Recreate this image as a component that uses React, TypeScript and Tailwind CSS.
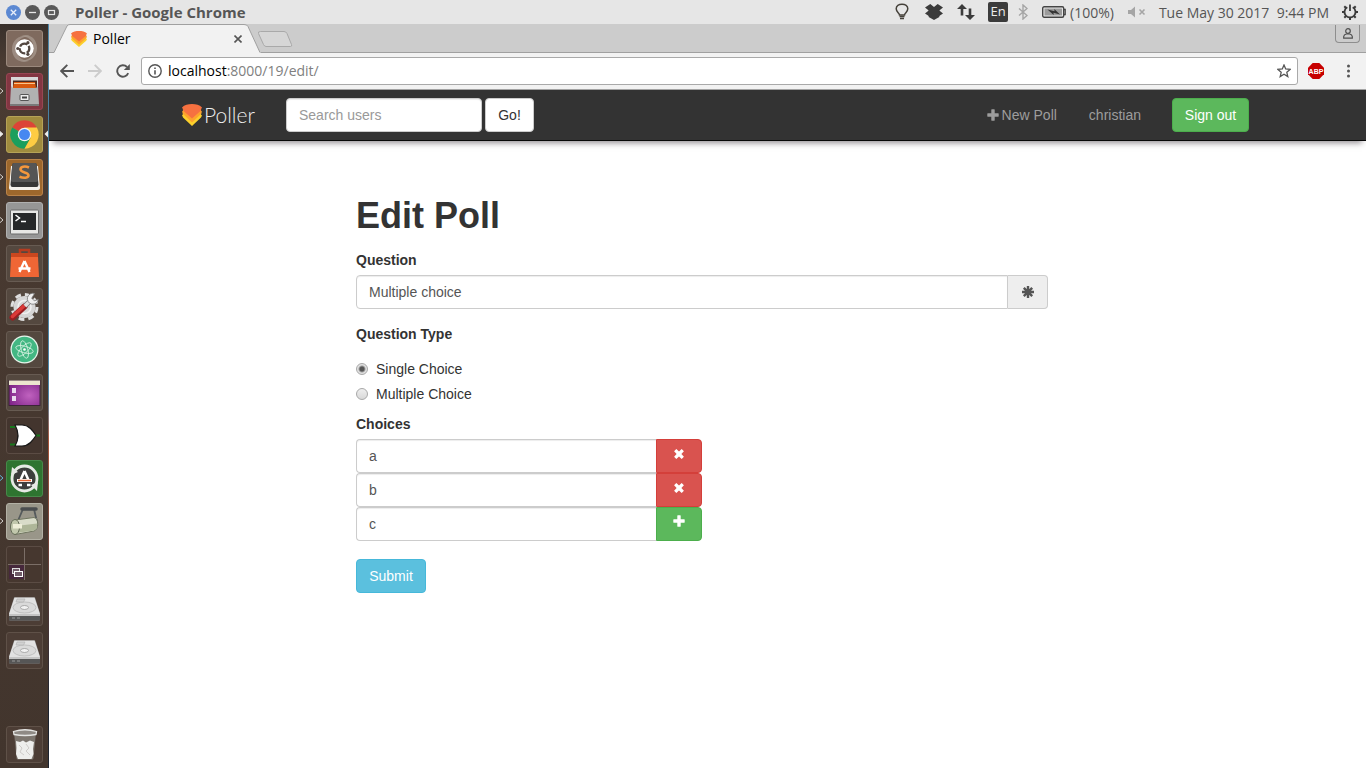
import React, { useState } from "react";

const shellFont = "font-['Open_Sans','Noto_Sans',sans-serif]";

function PollerMark({ className }: { className: string }) {
  return (
    <svg viewBox="0 0 20 22" className={className} aria-hidden="true" preserveAspectRatio="none">
      <path d="M0 11Q1.500 11 .8 9H19.200Q18.500 11 20 11.500L19 13.500 10 22 1 13.500z" fill="#fbd02c" />
      <path d="M0 7.500Q1.500 7.500 .8 5.500H19.200Q18.500 7.500 20 7.500L19 10 10 18.500 1 10z" fill="#fda32d" />
      <path d="M0 3.500C2.500.8 6 0 10 0s7.500.8 10 3.500Q18.800 5 18.500 7L10 14.500 1.500 7Q1.200 5 0 3.500z" fill="#f67140" />
    </svg>
  );
}

function WindowButtons() {
  return (
    <div className="flex gap-1">
      <button aria-label="Close" className="size-[15px]">
        <svg viewBox="0 0 15 15" className="size-full">
          <circle cx="7.5" cy="7.5" r="7.5" fill="#5b88d2" />
          <path d="M4.8 4.8l5.4 5.4M10.2 4.8l-5.4 5.4" stroke="#e8eefa" strokeWidth="1.3" />
        </svg>
      </button>
      <button aria-label="Minimize" className="size-[15px]">
        <svg viewBox="0 0 15 15" className="size-full">
          <circle cx="7.5" cy="7.5" r="7.5" fill="#595959" />
          <path d="M4 7.5h7" stroke="#e6e6e6" strokeWidth="1.3" />
        </svg>
      </button>
      <button aria-label="Maximize" className="size-[15px]">
        <svg viewBox="0 0 15 15" className="size-full">
          <circle cx="7.5" cy="7.5" r="7.5" fill="#595959" />
          <rect x="4.5" y="5.5" width="6" height="4" fill="none" stroke="#e6e6e6" strokeWidth="1.2" />
        </svg>
      </button>
    </div>
  );
}

function TopPanel() {
  return (
    <header className={`flex h-6 items-center bg-[#e6e6e6] pr-[7px] pl-[6px] text-[14px] text-[#555] ${shellFont}`}>
      <WindowButtons />
      <span className="ml-4 text-[15px] leading-5 font-bold whitespace-nowrap text-[#565656]">Poller - Google Chrome</span>
      <div className="ml-auto flex items-center whitespace-nowrap">
        <svg viewBox="0 0 14 18" className="h-[18px] w-[14px]" fill="none" stroke="#45413a">
          <path d="M4.500 12C4.500 10 1.200 9 1.200 5.800 1.200 3 3.800 1.200 7 1.200s5.800 1.800 5.800 4.600C12.800 9 9.500 10 9.500 12z" strokeWidth="1.500" />
          <path d="M4.500 13.500h5M5 15.500h4" strokeWidth="1.600" />
        </svg>
        <svg viewBox="0 0 18 16" className="ml-4 h-4 w-[18px]" fill="#3b3b3b">
          <path d="M5.300 0L9 3 12.700 0 18 3.600 14.300 6.600 18 9.600 12.700 13 9 10 5.300 13 0 9.600 3.700 6.600 0 3.600z" />
          <path d="M3.700 6.500L9 3.200l5.300 3.300V13L9 16l-5.300-3z" />
        </svg>
        <svg viewBox="0 0 18 16" className="ml-[14px] h-4 w-[18px]" fill="#3b3b3b">
          <path d="M0 5L5 0l5 5H6.300v6.500H3.700V5z" />
          <path d="M8 11l5 5 5-5h-3.700V4.500h-2.600V11z" />
        </svg>
        <span className="ml-[13px] flex size-5 items-center justify-center rounded-[2px] bg-[#3b3b3b] text-[13px] text-[#ececec]">En</span>
        <svg viewBox="0 0 10 16" className="ml-[10px] h-4 w-[10px]" fill="none" stroke="#a5a5a5" strokeWidth="1.400">
          <path d="M1 4.500l8 7-4 3.500V1l4 3.500-8 7" />
        </svg>
        <svg viewBox="0 0 24 12" className="ml-[14px] h-3 w-6">
          <rect x="0.700" y="0.700" width="21" height="10.600" rx="1.500" fill="#e6e6e6" stroke="#444" strokeWidth="1.400" />
          <rect x="2.500" y="2.500" width="17.500" height="7" fill="#9b9b9b" />
          <path d="M22 3.500h1.200v5H22" fill="none" stroke="#444" strokeWidth="1.300" />
          <path d="M5.500 3.500l7 1.800-.2-2.300L18 8.500l-6.500-1.800.2 2.300z" fill="#333" />
        </svg>
        <span className="ml-1">(100%)</span>
        <svg viewBox="0 0 18 12" className="ml-[14px] h-3 w-[18px]">
          <path d="M0 4h3l4-3.500v11L3 8H0z" fill="#a5a5a5" />
          <path d="M11.500 3.500l5 5M16.500 3.500l-5 5" stroke="#a5a5a5" strokeWidth="1.600" />
        </svg>
        <span className="ml-[13px] whitespace-pre">Tue May 30 2017  9:44 PM</span>
        <svg viewBox="0 0 18 18" className="ml-3 size-[18px]" fill="none" stroke="#3b3b3b">
          <path d="M6.300 4.200A5.500 5.500 0 1 0 11.700 4.200" strokeWidth="1.800" />
          <path d="M9 1.500v6.500" strokeWidth="1.800" />
          <path d="M3.300 3.300l1.700 1.700M14.700 3.300L13 5M1 9h2.500M14.500 9H17M3.300 14.700L5 13M14.700 14.700L13 13M9 14.500V17" strokeWidth="2" />
        </svg>
      </div>
    </header>
  );
}

type Launcher = { label: string; tile: string; marker?: "white" | "outline" | "blue"; active?: boolean; art: React.ReactNode };

const dark = "bg-[#54483f] border-[#675b52]";

const driveArt = (
  <>
    <path d="M8 8.500h21l5 16v6q0 1-1 1H4q-1 0-1-1v-6z" fill="#8d8d8d" />
    <path d="M8.500 8.500h20L34 25H3z" fill="#e2e2e2" />
    <path d="M3 25h31v5.500q0 1-1 1H4q-1 0-1-1z" fill="#565656" />
    <path d="M3 25h31v2H3z" fill="#c4c4c4" />
    <path d="M6 29h3M11 29h3" stroke="#999" />
    <ellipse cx="18.500" cy="18.500" rx="11.500" ry="5.500" fill="#dadada" stroke="#c0c0c0" />
    <ellipse cx="18.500" cy="18.500" rx="4" ry="2" fill="#f2f2f2" stroke="#9a9a9a" strokeWidth="0.800" />
    <path d="M11 10h8l-1.500 3H10z" fill="#d2d2d2" stroke="#b0b0b0" strokeWidth="0.600" />
  </>
);

const launchers: Launcher[] = [
  {
    label: "Search",
    tile: "bg-[#7f6a5e] border-[#9b897d]",
    art: (
      <>
        <path d="M6 19C6 9 15 4 24 6c-8 0-14 5-14 12 0 8 6 13 13 13C13 34 6 28 6 19z" fill="#a89a90" opacity=".7" />
        <path d="M31 18c0 10-9 15-17 13 8 0 14-5 14-12 0-8-6-13-13-13 9-3 16 3 16 12z" fill="#b3a69c" opacity=".6" />
        <circle cx="18.500" cy="18.500" r="9.300" fill="#fff" />
        <circle cx="18.500" cy="18.500" r="4.800" fill="none" stroke="#534741" strokeWidth="2.300" strokeDasharray="8.550 1.500" strokeDashoffset="3.500" />
        <circle cx="11.800" cy="18.500" r="1.600" fill="#534741" />
        <circle cx="21.900" cy="12.700" r="1.600" fill="#534741" />
        <circle cx="21.900" cy="24.300" r="1.600" fill="#534741" />
      </>
    ),
  },
  {
    label: "Files",
    tile: "bg-[#833642] border-[#974653]",
    marker: "outline",
    art: (
      <>
        <path d="M5 4h27v12H5z" fill="#d8d8d8" />
        <path d="M7 7.500h24v9H7z" fill="#4a2a20" />
        <path d="M8 9h21l1 6H7z" fill="#d8590f" />
        <path d="M8 10.500h21" stroke="#f9c58c" />
        <path d="M5 13l2 2h23l2-2 1 18.500H4z" fill="#b1b1b1" />
        <path d="M4 31h29v2H4z" fill="#797979" />
        <rect x="14" y="21.500" width="9" height="6" rx="1" fill="#eee" stroke="#555" />
        <path d="M16 24.500h5" stroke="#444" strokeWidth="2" />
      </>
    ),
  },
  {
    label: "Google Chrome",
    tile: "bg-[#a08b3e] border-[#b6a257]",
    marker: "white",
    active: true,
    art: (
      <>
        <path d="M18.500 18.500L6.200 11.400A14.200 14.200 0 0 1 30.800 11.400Z" fill="#dc4437" />
        <path d="M18.500 18.500L6.200 11.400A14.200 14.200 0 0 0 18.500 32.700L24.500 22Z" fill="#1b9f5d" />
        <path d="M18.500 11.500H30.900A14.200 14.200 0 0 1 18.500 32.700L24.600 22Z" fill="#fecc43" />
        <circle cx="18.500" cy="18.500" r="6.800" fill="#f3f3f3" />
        <circle cx="18.500" cy="18.500" r="5.500" fill="#4688f1" />
      </>
    ),
  },
  {
    label: "Sublime Text",
    tile: "bg-[#9d672c] border-[#b98249]",
    marker: "outline",
    art: (
      <>
        <path d="M5 7h27l2 22q0 2-2 2H5q-2 0-2-2z" fill="#f4f1ec" />
        <path d="M8 4h21q1.500 0 1.700 1.500l1.800 20q0 2.500-2 2.500H6.500q-2 0-2-2.500l1.800-20Q6.500 4 8 4z" fill="#363636" />
        <path d="M8 4h21q1.500 0 1.700 1.500L32 21q0 2-2 2H7q-2 0-2-2L6.300 5.500Q6.500 4 8 4z" fill="#555" />
        <path d="M23 8.500c-4-1.800-8.500-1-8.500 1.800 0 3.700 8 2.500 8 6 0 3-5 3-9 1.500" fill="none" stroke="#f5973c" strokeWidth="2.600" />
      </>
    ),
  },
  {
    label: "Terminal",
    tile: "bg-[#969696] border-[#b0b0b0]",
    marker: "outline",
    art: (
      <>
        <rect x="4.500" y="8" width="28" height="24" rx="1" fill="#e7e7e5" stroke="#6b6b6b" />
        <rect x="7" y="11" width="23" height="17" fill="#262829" />
        <path d="M9.500 13l4 3-4 3" stroke="#fff" strokeWidth="1.500" fill="none" />
        <path d="M15 19.500h5" stroke="#fff" strokeWidth="1.500" />
      </>
    ),
  },
  {
    label: "Ubuntu Software",
    tile: dark,
    art: (
      <>
        <path d="M14 9V5h9v4" fill="none" stroke="#b73c20" strokeWidth="2.500" />
        <path d="M5 8h27v5H5z" fill="#c9471f" />
        <path d="M5 12h27l1 20H4z" fill="#ef6635" />
        <path d="M18.500 16l-5 11M18.500 16l5 11M12.500 23.500h12" stroke="#fff" strokeWidth="2.400" fill="none" />
      </>
    ),
  },
  {
    label: "System Settings",
    tile: dark,
    art: (
      <>
        <circle cx="18.500" cy="19" r="12.500" fill="none" stroke="#dedede" strokeWidth="3" strokeDasharray="5.800 4.020" />
        <circle cx="18.500" cy="19" r="11" fill="#d5d5d5" />
        <circle cx="18.500" cy="19" r="6.500" fill="none" stroke="#f0f0f0" strokeWidth="1.500" />
        <path d="M6.500 29.500l12-11" stroke="#9a1e20" strokeWidth="6" strokeLinecap="round" />
        <path d="M6.500 28.500l12-11" stroke="#db3a38" strokeWidth="3.500" strokeLinecap="round" />
        <path d="M19 18l6-6" stroke="#777" strokeWidth="5" />
        <path d="M19 18l6-6" stroke="#ddd" strokeWidth="3.600" />
        <path d="M28.500 5.500a5.500 5.500 0 1 0 3.800 6l-4 1.300-2.600-2.600z" fill="#eee" stroke="#777" strokeWidth="0.800" />
      </>
    ),
  },
  {
    label: "Atom",
    tile: dark,
    art: (
      <>
        <circle cx="18.500" cy="18.500" r="14" fill="#e8f5ec" />
        <circle cx="18.500" cy="18.500" r="12.800" fill="#43b783" />
        <g fill="none" stroke="#d9f2e4" strokeWidth="0.800">
          <ellipse cx="18.500" cy="18.500" rx="9" ry="3.300" transform="rotate(15 18.500 18.500)" />
          <ellipse cx="18.500" cy="18.500" rx="9" ry="3.300" transform="rotate(75 18.500 18.500)" />
          <ellipse cx="18.500" cy="18.500" rx="9" ry="3.300" transform="rotate(135 18.500 18.500)" />
        </g>
        <circle cx="18.500" cy="18.500" r="1.300" fill="#fff" />
      </>
    ),
  },
  {
    label: "Desktop",
    tile: dark,
    art: (
      <>
        <defs>
          <radialGradient id="desktop-glow" cx=".65" cy=".6" r=".7">
            <stop offset="0" stopColor="#c062bf" />
            <stop offset="1" stopColor="#7f2488" />
          </radialGradient>
        </defs>
        <rect x="3" y="6.500" width="31" height="25" fill="url(#desktop-glow)" stroke="#3c2438" />
        <path d="M3 6.500h31v4.500H3z" fill="#ece6cf" />
        <path d="M6 14h4v5H6zM6 22h4v5H6z" fill="#e9d9ee" />
      </>
    ),
  },
  {
    label: "Logic Gate",
    tile: "bg-[#43352e] border-[#5b4c44]",
    art: (
      <>
        <path d="M4 10h7M4 27.500h7M28 18.500h6" stroke="#18771c" strokeWidth="1.800" />
        <path d="M9 8h7c7 0 11 6 14 10.500C27 23 23 29 16 29H9c4-7 4-14 0-21z" fill="#fff" stroke="#171717" strokeWidth="1.200" />
      </>
    ),
  },
  {
    label: "Software Updater",
    tile: "bg-[#2e7430] border-[#47894a]",
    marker: "blue",
    art: (
      <>
        <circle cx="18.500" cy="18.500" r="11" fill="#3d3d3d" />
        <circle cx="18.500" cy="18.500" r="12.500" fill="none" stroke="#e7e9e6" strokeWidth="2.800" />
        <path d="M5 15l1-8 6 5zM32 22l-1 9-6-6z" fill="#e7e9e6" />
        <path d="M18.500 11l-4 9M18.500 11l4 9" stroke="#fff" strokeWidth="2.500" />
        <path d="M11 19h15v3H11z" fill="#fff" />
        <path d="M12 20.500h13" stroke="#e86430" strokeWidth="1.500" />
        <path d="M12.500 25h3.500M21 25h3.500" stroke="#fff" strokeWidth="2.500" />
      </>
    ),
  },
  {
    label: "Seed Roller",
    tile: "bg-[#999689] border-[#b3b1a5]",
    marker: "outline",
    art: (
      <>
        <path d="M11 20l6-14M28 6l3 13" fill="none" stroke="#555a5c" strokeWidth="1.800" />
        <path d="M16 6h14" stroke="#4a4d4f" strokeWidth="3.500" strokeLinecap="round" />
        <path d="M9 17l19-2.500c5 1 5 12 0 13.500L9 31.500z" fill="#d9dcc9" stroke="#707660" />
        <path d="M10 23l21-2.500v4.500l-3 2.500-18 2.500z" fill="#aeb698" />
        <ellipse cx="9" cy="24" rx="4.500" ry="7.500" fill="#c1c7ac" stroke="#646b57" />
        <path d="M7 21h9v4.500H7z" fill="#eeeed8" />
      </>
    ),
  },
  {
    label: "Workspace Switcher",
    tile: "bg-[#46372f] border-[#5b4c44]",
    art: (
      <>
        <path d="M3 19h16v14H3z" fill="#46283c" />
        <path d="M18.500 2v32M2 18.500h33" stroke="#7b6e67" />
        <rect x="6.500" y="22.500" width="7" height="5" fill="#705b68" stroke="#ddd" />
        <rect x="8.500" y="25.500" width="8" height="5" fill="#705b68" stroke="#fff" />
      </>
    ),
  },
  { label: "Disk 1", tile: "bg-[#4c3d35] border-[#5f5148]", art: driveArt },
  { label: "Disk 2", tile: "bg-[#4c3d35] border-[#5f5148]", art: driveArt },
];

const trash: Launcher = {
  label: "Trash",
  tile: "bg-[#4c3d35] border-[#5f5148]",
  art: (
    <>
      <path d="M8 6h22l-2.500 26q-.2 1.500-1.500 1.500H12q-1.300 0-1.500-1.500z" fill="#7d766f" />
      <path d="M10 15l4 1 3-1.500 3 2 4-2 4 1.500-1 7 .5 5-2 5H12l-2-5 .5-6z" fill="#eeeeec" />
      <path d="M13 19l3 3-2 4 4 3M20 18l3 4-3 3 4 4" stroke="#cfccc9" fill="none" />
      <path d="M7.500 5.500Q19 2 30.500 5.500L30 8.500Q19 10.500 8 8.500z" fill="#8f8a85" stroke="#e5e5e3" strokeWidth="1.300" />
    </>
  ),
};

function LauncherTile({ item }: { item: Launcher }) {
  return (
    <button aria-label={item.label} className="relative flex h-[37px] w-full pl-[6px]">
      {item.marker && (
        <svg viewBox="0 0 4 8" className="absolute top-[14px] left-0 h-2 w-1">
          <path
            d="M-1 0.500L3 4l-4 3.500"
            fill={item.marker === "white" ? "#eee" : "none"}
            stroke={item.marker === "blue" ? "#62b6d4" : "#d4d0cd"}
          />
        </svg>
      )}
      <span className={`flex size-[37px] rounded-[3px] border ${item.tile}`}>
        <svg viewBox="1 1 35 35" className="size-[35px]">
          {item.art}
        </svg>
      </span>
      {item.active && (
        <svg viewBox="0 0 4 8" className="absolute top-[14px] right-0 h-2 w-1">
          <path d="M4 0.500L0.500 4 4 7.500z" fill="#eee" />
        </svg>
      )}
    </button>
  );
}

function Sidebar() {
  return (
    <aside className="flex shrink-0 bg-linear-to-b from-[#38302b] via-[#4a3b32] via-5% to-[#42352d]">
      <nav aria-label="Launcher" className="flex w-12 flex-col gap-[6px] pt-[6px] pb-[5px]">
        {launchers.map((item) => (
          <LauncherTile key={item.label} item={item} />
        ))}
        <div className="mt-auto">
          <LauncherTile item={trash} />
        </div>
      </nav>
      <div className="w-px bg-linear-to-b from-[#4b86a8] from-50% via-[#a8553a] via-56% to-[#1d2430] to-92%" />
    </aside>
  );
}

function TabStrip() {
  return (
    <div className="flex h-[29px] border-b border-[#a0a0a0] bg-[#cccccc]">
      <div className="relative -mb-px flex h-[29px] w-[212px] items-center pr-[17px] pl-[22px]">
        <svg viewBox="0 0 212 29" className="absolute inset-0 size-full">
          <path d="M0 28.500H5L18 2Q19 .5 21 .5H195Q198 .5 199 2.500L211 28.500H212V29H0z" fill="#f2f2f2" />
          <path d="M0 28.500H5L18 2Q19 .5 21 .5H195Q198 .5 199 2.500L211 28.500" fill="none" stroke="#a0a0a0" />
        </svg>
        <PollerMark className="relative h-4 w-4" />
        <span className="relative ml-[6px] text-[14px] text-black">Poller</span>
        <button aria-label="Close tab" className="relative ml-auto flex size-3 items-center justify-center">
          <svg viewBox="0 0 8 8" className="size-2">
            <path d="M.5.5l7 7M7.500.5l-7 7" stroke="#555" strokeWidth="1.600" />
          </svg>
        </button>
      </div>
      <button aria-label="New tab" className="-ml-1 h-[18px] w-9 self-start pt-[6px]">
        <svg viewBox="0 0 36 18" className="h-[18px] w-9">
          <path d="M3.500 1.500H27Q29 1.500 30 3.500l4.500 11q.8 2-1 2H9Q7.500 16.500 6.500 14.500L1.500 3.500q-.8-2 2-2z" fill="#d6d6d6" stroke="#a9a9a9" />
        </svg>
      </button>
      <button aria-label="Profile" className="mt-px mr-[6px] ml-auto flex h-[18px] w-[25px] items-center justify-center rounded-b-[4px] border border-t-0 border-[#8e8e8e]">
        <svg viewBox="0 0 10 11" className="h-[11px] w-[10px]" fill="none" stroke="#4f4f4f" strokeWidth="1.200">
          <circle cx="5" cy="3" r="2.300" />
          <path d="M.7 10.200V8.500Q1 6.500 3.300 6h3.400q2.300.5 2.600 2.500v1.700z" />
        </svg>
      </button>
    </div>
  );
}

function Toolbar() {
  const [url, setUrl] = useState("localhost:8000/19/edit/");
  const [host, ...rest] = url.split(":");
  return (
    <div className="flex h-[37px] items-center border-b border-[#a3a3a3] bg-[#f2f2f2] pr-[11px] pl-[11px]">
      <button aria-label="Back">
        <svg viewBox="0 0 14 14" className="size-[14px]" fill="none" stroke="#555" strokeWidth="1.900">
          <path d="M7.300.8L1.200 7l6.100 6.200M1.500 7H14" />
        </svg>
      </button>
      <button aria-label="Forward" className="ml-[14px]">
        <svg viewBox="0 0 14 14" className="size-[14px]" fill="none" stroke="#ccc" strokeWidth="1.900">
          <path d="M6.700.8L12.800 7l-6.100 6.200M12.500 7H0" />
        </svg>
      </button>
      <button aria-label="Reload" className="ml-[14px]">
        <svg viewBox="0 0 14 14" className="size-[14px]">
          <path d="M12.200 9.200A5.700 5.700 0 1 1 11 3" fill="none" stroke="#555" strokeWidth="1.900" />
          <path d="M13.800 0v6H7.800z" fill="#555" />
        </svg>
      </button>
      <div className="ml-[11px] flex h-[28px] flex-1 items-center rounded-[3px] border border-[#a9a9a9] bg-white px-[6px]">
        <svg viewBox="0 0 14 14" className="size-[14px]" fill="none" stroke="#555">
          <circle cx="7" cy="7" r="6.200" strokeWidth="1.400" />
          <path d="M7 6.200v4.300M7 3.500v1.600" strokeWidth="1.600" />
        </svg>
        <label className="relative ml-[6px] flex flex-1 items-center text-[14px] leading-5">
          <span aria-hidden="true" className="text-[#808080]">
            <span className="text-black">{host}</span>
            {rest.length > 0 && ":" + rest.join(":")}
          </span>
          <input
            aria-label="Address"
            value={url}
            onChange={(e) => setUrl(e.target.value)}
            className="absolute inset-0 w-full bg-transparent text-transparent caret-black outline-none"
          />
        </label>
        <button aria-label="Bookmark">
          <svg viewBox="0 0 14 14" className="size-[14px]" fill="none" stroke="#555" strokeWidth="1.300">
            <path d="M7 1l1.700 4 4.400.4-3.300 2.900 1 4.300L7 10.300l-3.800 2.300 1-4.300L.9 5.400 5.300 5z" />
          </svg>
        </button>
      </div>
      <button aria-label="Adblock Plus" className="ml-[10px]">
        <svg viewBox="0 0 16 16" className="size-4">
          <path d="M4.700 0h6.600L16 4.700v6.600L11.300 16H4.700L0 11.300V4.700z" fill="#c70000" />
          <text x="8" y="10.700" textAnchor="middle" fontSize="7" fontWeight="bold" fill="#fff" fontFamily="Liberation Sans">ABP</text>
        </svg>
      </button>
      <button aria-label="Menu" className="ml-[18px]">
        <svg viewBox="0 0 13 14" className="h-[14px] w-[13px]" fill="#555">
          <circle cx="6.500" cy="2" r="1.500" />
          <circle cx="6.500" cy="7" r="1.500" />
          <circle cx="6.500" cy="12" r="1.500" />
        </svg>
      </button>
    </div>
  );
}

function PlusGlyph({ className }: { className: string }) {
  return (
    <svg viewBox="0 0 12 12" className={className} fill="currentColor" aria-hidden="true">
      <path d="M4.700.3h2.600q.4 0 .4.400v3.600h3.600q.4 0 .4.400v2.600q0 .4-.4.400H7.700v3.600q0 .4-.4.400H4.700q-.4 0-.4-.4V7.700H.7q-.4 0-.4-.4V4.700q0-.4.400-.4h3.600V.7q0-.4.400-.4z" />
    </svg>
  );
}

function RemoveGlyph() {
  return (
    <svg viewBox="0 0 10 10" className="size-[10px]" fill="currentColor" aria-hidden="true">
      <path d="M2.300.1L5 2.600 7.700.1l2.200 2.200L7.400 5l2.500 2.700-2.200 2.200L5 7.400 2.300 9.900.1 7.700 2.600 5 .1 2.300z" />
    </svg>
  );
}

function AsteriskGlyph() {
  return (
    <svg viewBox="0 0 12 12" className="size-3" stroke="#555" strokeWidth="2.400" aria-hidden="true">
      <path d="M6 0v12M0 6h12M1.800 1.800l8.400 8.400M10.200 1.800l-8.400 8.400" />
    </svg>
  );
}

const field =
  "h-[34px] min-w-0 border border-[#ccc] bg-white px-3 text-[14px] text-[#555] shadow-[inset_0_1px_1px_rgba(0,0,0,0.075)] outline-none placeholder:text-[#999]";

function Navbar() {
  return (
    <nav className="border-b border-[#080808] bg-[#333] shadow-[0_6px_6px_-4px_rgba(40,30,40,0.5)]">
      <div className="mx-auto flex h-[50px] max-w-[1171px] items-center pr-11 pl-[60px]">
        <a href="#home" className="flex w-[73px] items-center">
          <PollerMark className="h-[22px] w-5" />
          <span className="ml-[2px] font-['Lato',sans-serif] text-[21px] font-light text-[#eee]">Poller</span>
        </a>
        <form className="ml-[31px] flex gap-[3px]" onSubmit={(e) => e.preventDefault()}>
          <input aria-label="Search users" placeholder="Search users" className={`${field} w-[196px] rounded-[4px]`} />
          <button className="h-[34px] w-[49px] rounded-[4px] border border-[#ccc] bg-white text-[#333]">Go!</button>
        </form>
        <div className="ml-auto flex items-center text-[#9d9d9d]">
          <a href="#new" className="flex items-center gap-[3px]">
            <PlusGlyph className="size-3" />
            New Poll
          </a>
          <a href="#profile" className="ml-8">christian</a>
          <button className="ml-[31px] h-[34px] w-[77px] rounded-[4px] border border-[#4cae4c] bg-[#5cb85c] text-white">Sign out</button>
        </div>
      </div>
    </nav>
  );
}

const radio =
  "size-3 appearance-none rounded-full border border-[#a8a8a8] bg-linear-to-b from-[#eee] to-[#d8d8d8] checked:bg-[radial-gradient(circle,#555_0_2px,#e2e2e2_4px)]";

function EditPoll() {
  const [question, setQuestion] = useState("Multiple choice");
  const [type, setType] = useState("Single Choice");
  const [choices, setChoices] = useState(["a", "b", "c"]);
  return (
    <main className="mx-auto w-full max-w-[1171px] pt-[55px] pr-[245px] pb-10 pl-[234px]">
      <h1 className="text-[36px] leading-10 font-bold">Edit Poll</h1>
      <form className="mt-[14px]" onSubmit={(e) => e.preventDefault()}>
        <label htmlFor="question" className="block font-bold">Question</label>
        <div className="mt-[5px] flex">
          <input id="question" value={question} onChange={(e) => setQuestion(e.target.value)} className={`${field} flex-1 rounded-l-[4px]`} />
          <span className="flex w-10 items-center justify-center rounded-r-[4px] border border-l-0 border-[#ccc] bg-[#eee]">
            <AsteriskGlyph />
          </span>
        </div>
        <fieldset className="mt-[15px]">
          <legend className="font-bold">Question Type</legend>
          <div className="mt-[15px] flex flex-col items-start gap-[5px]">
            {["Single Choice", "Multiple Choice"].map((name) => (
              <label key={name} className="flex items-center gap-2">
                <input type="radio" name="type" checked={type === name} onChange={() => setType(name)} className={radio} />
                {name}
              </label>
            ))}
          </div>
        </fieldset>
        <fieldset className="mt-[10px] w-1/2">
          <legend className="mb-[5px] font-bold">Choices</legend>
          {choices.map((value, i) => {
            const last = i === choices.length - 1;
            return (
              <div key={i} className="flex">
                <input
                  aria-label={`Choice ${i + 1}`}
                  value={value}
                  onChange={(e) => setChoices(choices.map((c, j) => (j === i ? e.target.value : c)))}
                  className={`${field} flex-1 rounded-l-[4px] border-r-0`}
                />
                <button
                  type="button"
                  aria-label={last ? "Add choice" : "Remove choice"}
                  onClick={() => setChoices(last ? [...choices, ""] : choices.filter((_, j) => j !== i))}
                  className={`flex h-[34px] w-[46px] justify-center rounded-r-[4px] border text-white ${
                    last ? "border-[#4cae4c] bg-[#5cb85c] pt-[7px]" : "border-[#d43f3a] bg-[#d9534f] pt-[9px]"
                  }`}
                >
                  {last ? <PlusGlyph className="size-3" /> : <RemoveGlyph />}
                </button>
              </div>
            );
          })}
        </fieldset>
        <button className="mt-[18px] h-[34px] w-[70px] rounded-[4px] border border-[#46b8da] bg-[#5bc0de] text-white">Submit</button>
      </form>
    </main>
  );
}

export default function App() {
  return (
    <div className="flex min-h-screen flex-col bg-white">
      <TopPanel />
      <div className="flex flex-1">
        <Sidebar />
        <div className="flex min-w-0 flex-1 flex-col">
          <div className={shellFont}>
            <TabStrip />
            <Toolbar />
          </div>
          <div className="flex-1 font-['Liberation_Sans',Arial,sans-serif] text-[14px] leading-5 text-[#333]">
            <Navbar />
            <EditPoll />
          </div>
        </div>
      </div>
    </div>
  );
}
